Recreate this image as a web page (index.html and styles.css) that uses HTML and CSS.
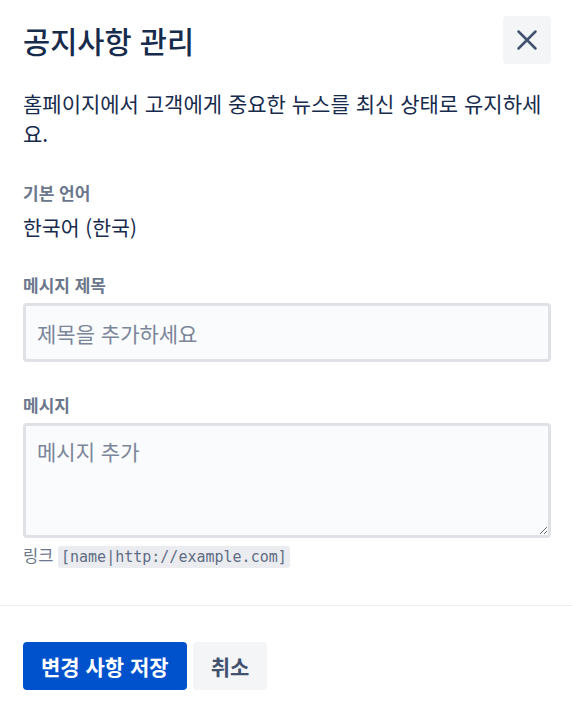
FILE: index.html
```html
<!DOCTYPE html>
<html lang="ko">
<head>
  <meta charset="UTF-8" />
  <title>공지사항 관리</title>
  <link rel="stylesheet" href="styles.css">
</head>
<body>
  <div class="modal">
    <div class="modal-header">
      <h1>공지사항 관리</h1>
      <button class="btn-close" aria-label="닫기">
        <svg width="24" height="24" viewBox="0 0 24 24">
          <path d="M3.5 3.5 L20.5 20.5 M20.5 3.5 L3.5 20.5" stroke="#42526e" stroke-width="2.5" stroke-linecap="round" fill="none"/>
        </svg>
      </button>
    </div>

    <div class="modal-body">
      <p class="descripcion">홈페이지에서 고객에게 중요한 뉴스를 최신 상태로 유지하세요.</p>

      <div class="campo campo-idioma">
        <div class="etiqueta">기본 언어</div>
        <div class="valor">한국어 (한국)</div>
      </div>

      <div class="campo">
        <label class="etiqueta" for="titulo">메시지 제목</label>
        <input type="text" id="titulo" placeholder="제목을 추가하세요" />
      </div>

      <div class="campo campo-mensaje">
        <label class="etiqueta" for="mensaje">메시지</label>
        <textarea id="mensaje" placeholder="메시지 추가"></textarea>
        <div class="ayuda">링크 <code>[name|http://example.com]</code></div>
      </div>
    </div>

    <div class="modal-footer">
      <button class="btn-guardar">변경 사항 저장</button>
      <button class="btn-cancelar">취소</button>
    </div>
  </div>
</body>
</html>
```

FILE: styles.css
```css
body {
  margin: 0;
  padding: 0;
  font-family: "Noto Sans CJK KR", "Noto Sans", sans-serif;
  color: #172b4d;
  background-color: #ffffff;
}

.modal {
  width: 572px;
}

.modal-header {
  display: flex;
  justify-content: space-between;
  align-items: center;
  padding: 16px 21px 0 23px;
}

h1 {
  margin: 0;
  font-size: 29.5px;
  font-weight: 500;
  color: #172b4d;
}

.btn-close {
  width: 48px;
  height: 48px;
  border: none;
  border-radius: 4px;
  background-color: #f4f5f7;
  display: flex;
  align-items: center;
  justify-content: center;
  padding: 0;
  cursor: pointer;
}

.modal-body {
  padding: 0 21px 0 23px;
}

.descripcion {
  margin: 24px 0 0;
  font-size: 21px;
  line-height: 30px;
}

.campo {
  margin-top: 32px;
}

.campo-idioma {
  margin-top: 35px;
}

.campo-mensaje {
  margin-top: 33px;
}

.etiqueta {
  display: block;
  font-size: 17px;
  font-weight: 700;
  color: #6b778c;
  line-height: 20px;
  margin-bottom: 8px;
}

.valor {
  font-size: 20.5px;
  line-height: 32px;
}

input,
textarea {
  display: block;
  width: 100%;
  box-sizing: border-box;
  font-family: inherit;
  font-size: 21px;
  color: #172b4d;
  background-color: #fafbfc;
  border: 3px solid #dfe1e6;
  border-radius: 4px;
  outline: none;
  padding: 0 11px;
}

input {
  height: 59px;
}

textarea {
  height: 115px;
  resize: vertical;
  padding-top: 10px;
  margin: 0;
}

input::placeholder,
textarea::placeholder {
  color: #7a869a;
}

.ayuda {
  margin-top: 5px;
  font-size: 16.5px;
  color: #6b778c;
  line-height: 24px;
}

code {
  font-family: "DejaVu Sans Mono", monospace;
  font-size: 15px;
  background-color: #ebecf0;
  color: #5e6c84;
  padding: 2px 3px;
  border-radius: 3px;
}

.modal-footer {
  margin-top: 36px;
  border-top: 1px solid #ebecf0;
  padding: 36px 23px 0;
  display: flex;
  gap: 6px;
}

.modal-footer button {
  height: 48px;
  border: none;
  border-radius: 4px;
  font-family: inherit;
  font-size: 21px;
  font-weight: 700;
  padding: 0 18px;
  cursor: pointer;
}

.btn-guardar {
  background-color: #0052cc;
  color: #ffffff;
}

.btn-cancelar {
  background-color: #f4f5f7;
  color: #42526e;
}
```
